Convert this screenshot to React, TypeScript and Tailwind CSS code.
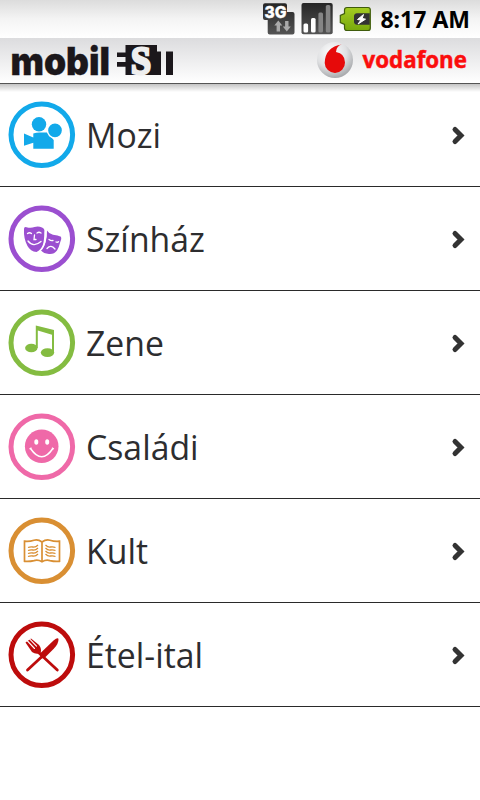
import type { ReactNode } from 'react'

const MovieIcon = () => (
  <g fill="#12a9ea">
    <circle cx="32" cy="24.300" r="7.200" />
    <path d="M26.300 33.500q3-1 6-1h8l6.400 7.500v8.700H26.300v-6l-9.300 3V33.500l9.300 4z" />
    <circle cx="48" cy="30.300" r="7.600" stroke="#fff" strokeWidth="1.500" />
  </g>
)

const MasksIcon = () => (
  <g>
    <path fill="#9b4fd0" d="M40 26.500q2 3.500 6 4.300q5 .5 8 2q1 2-.8 5.500q-1.200 5-3.200 8.200q-3 4-8 3.500q-5.500-.5-8-3.500q6-6 6-20z" />
    <path fill="#9b4fd0" d="M17 25q0-2.500 2.500-1.800q4.500 1.300 8-.2q4-1 7.500.5q3 1 2.300 4.500q0 8-1.300 12.500q-2 5.500-6.500 7.500q-6-.5-9-6q-4-7-3.500-17z" />
    <path fill="none" stroke="#fff" strokeWidth="1.300" strokeLinecap="round" d="M20.500 29.500q2-1.500 4 0M30 29q2-1.500 4 0M21 37q5.500 7 13 .5M27.500 31l-.5 4.500h2M42 35.500q2 1.500 4 1M49 38q1.500.6 2.500-.3M40 44.500q4-4.500 8 .5" />
    <path fill="none" stroke="#fff" strokeWidth="1.200" d="M38.800 25q.8 14-4.500 21" />
  </g>
)

const MusicIcon = () => (
  <g fill="#84bc41">
    <ellipse cx="24.300" cy="40" rx="6.200" ry="4.300" />
    <ellipse cx="40.500" cy="44.600" rx="6.700" ry="4.400" />
    <path d="M28.800 17.500l18.200 4.500V45h-2V26.800L30.800 22.500V40h-2z" />
  </g>
)

const SmileyIcon = () => (
  <g>
    <circle cx="34.700" cy="34.300" r="16.800" fill="#ef69a8" />
    <ellipse cx="29.300" cy="30" rx="2" ry="2.800" fill="#fff" />
    <ellipse cx="40.200" cy="30" rx="2" ry="2.800" fill="#fff" />
    <path d="M23.500 36.500q11.200 16.500 22.400 0" fill="none" stroke="#fff" strokeWidth="1.500" />
    <path d="M22.500 37l2-1.200M46.900 37l-2-1.200" stroke="#fff" strokeWidth="1.200" />
  </g>
)

const BookIcon = () => (
  <g fill="none" stroke="#d98f33">
    <path strokeWidth="1.700" d="M35 26q-4-3-8-1.800q-4.500 1.500-9.500 1V45.300q5 .5 9.500-.7q4-1.200 8 1.200q4-2.400 8-1.200q4.500 1.200 9.500.7V25.200q-5 .5-9.500-1q-4-1.200-8 1.800zV45.500" />
    <path strokeWidth="1.300" d="M21 31.500q2.500-1 5-.5t5-2M21 34.500q2.500-1 5-.5t5-2M21 37.500q2.500-1 5-.5t5-2M21 40.500q2.500-1 5-.5t5-2M38.500 29q2.500 2.500 5 2t5 .5M38.500 32q2.500 2.500 5 2t5 .5M38.500 35q2.500 2.500 5 2t5 .5M38.500 38q2.500 2.500 5 2t5 .5" />
  </g>
)

const CutleryIcon = () => (
  <g fill="none" stroke="#bd0c0c" strokeLinecap="round">
    <path strokeWidth="2.800" d="M20.500 50L35 36.500M50.300 50L31 32" />
    <path fill="#bd0c0c" stroke="none" d="M33 33.500L46.500 20.500q4.500-3.800 5-1.500q.2 4.500-4.500 9.500L38 37.500l-4 1z" />
    <path fill="#bd0c0c" stroke="none" d="M18.500 22.500l5.500-4 8 6.500q3 4 1.500 8q-4.500 2-8.500-1z" />
    <path stroke="#fff" strokeWidth="1.100" d="M20 20.500l7.500 8M22.500 18.800l7 7.400" />
  </g>
)

const categories: { name: string; color: string; icon: ReactNode }[] = [
  { name: 'Mozi', color: '#12a9ea', icon: <MovieIcon /> },
  { name: 'Színház', color: '#9b4fd0', icon: <MasksIcon /> },
  { name: 'Zene', color: '#84bc41', icon: <MusicIcon /> },
  { name: 'Családi', color: '#ef69a8', icon: <SmileyIcon /> },
  { name: 'Kult', color: '#d98f33', icon: <BookIcon /> },
  { name: 'Étel-ital', color: '#bd0c0c', icon: <CutleryIcon /> },
]

const StatusIcons = () => (
  <svg width="116" height="38" viewBox="0 0 116 38">
    <defs>
      <linearGradient id="dark" x2="0" y2="1">
        <stop stopColor="#252525" />
        <stop offset="1" stopColor="#555" />
      </linearGradient>
      <linearGradient id="green" x2="0" y2="1">
        <stop stopColor="#a4cc22" />
        <stop offset="1" stopColor="#78a80c" />
      </linearGradient>
    </defs>

    {/* 3G */}
    <path d="M6 3.300h20q2 0 2 2V12h5.500q2 0 2 2v18.500q0 2-2 2H10.700q-2 0-2-2V20H6q-2 0-2-2V5.300q0-2 2-2z" fill="url(#dark)" />
    <text x="5.500" y="17.500" fontSize="16.500" fontWeight="800" textLength="22" lengthAdjust="spacingAndGlyphs" fill="#fff" stroke="#fff" strokeWidth="0.400" className="font-['Inter','Liberation_Sans',sans-serif]">3G</text>
    <path d="M19.300 20.500l4 5h-2.300v6h-3.400v-6h-2.300zM27.800 31.500l-4-5h2.300v-5.500h3.400v5.500h2.300z" fill="#aaa" />

    {/* signal */}
    <rect x="42.500" y="3" width="31.200" height="31.300" rx="2" fill="url(#dark)" />
    <rect x="44.500" y="23.500" width="4.600" height="9" rx="1.500" fill="#fff" />
    <rect x="52" y="18" width="4.600" height="14.500" rx="1.500" fill="#fff" />
    <rect x="59.400" y="12.500" width="4.600" height="20" rx="1.500" fill="#858585" />
    <rect x="66.800" y="5" width="4.600" height="27.500" rx="1.500" fill="#858585" />

    {/* battery */}
    <path d="M88 7.500h21q2.300 0 2.300 2.300v18.400q0 2.300-2.300 2.300H88q-2.500 0-2.500-2.500v-3.500l-4.200-2v-7l4.200-2V10q0-2.500 2.500-2.500z" fill="url(#green)" stroke="#3f5c0c" strokeWidth="1.200" />
    <path d="M98 13.300h12.700v11.400H98q-3-.4-3-3v-5.400q0-2.600 3-3z" fill="#333" />
    <path d="M104.500 14.500l-6 5 3.500.6-3 3.900 7.500-4.800-3.300-.8z" fill="#fff" stroke="#fff" strokeWidth="1" />
  </svg>
)

const StatusBar = () => (
  <div className="flex h-[38px] items-center justify-end bg-linear-to-b from-[#dcdcdc] via-[#f4f4f4] to-white pr-[10px]">
    <StatusIcons />
    <span className="ml-[5px] text-[23px] font-bold text-black">8:17 AM</span>
  </div>
)

const MobilEstLogo = () => (
  <svg className="overflow-visible" width="166" height="45" viewBox="0 0 166 45">
    <text x="0.500" y="36.500" fontSize="38" fontWeight="900" textLength="99.500" lengthAdjust="spacingAndGlyphs" fill="#1b171b" stroke="#1b171b" strokeWidth="0.300" className="font-['Inter','Lato',sans-serif]">mobil</text>
    <path d="M107 14.500h8.500V7H147v6.500h4V37h-35.500v-8.200H107v-4.800h8.500v-5H107z" fill="#1b171b" />
    <rect x="156" y="13.500" width="7" height="23.500" fill="#1b171b" />
    <text x="121" y="35.500" fontSize="40" fontWeight="700" textLength="20" lengthAdjust="spacingAndGlyphs" fill="#eee" stroke="#eee" strokeWidth="2.800" className="font-['Liberation_Serif',serif]">S</text>
  </svg>
)

const VodafoneLogo = () => (
  <svg className="overflow-visible" width="156" height="45" viewBox="0 0 156 45">
    <defs>
      <radialGradient id="ball" cx="0.4" cy="0.3" r="0.7">
        <stop stopColor="#fff" />
        <stop offset="0.600" stopColor="#dfe0e2" />
        <stop offset="1" stopColor="#a9abae" />
      </radialGradient>
    </defs>
    <circle cx="19" cy="22" r="18" fill="url(#ball)" />
    <path d="M26 6.500q-5.500 1-6 7.500q9 1.500 9 10.500a10 10 0 0 1-20.300.500Q9 9 26 6.500z" fill="#e60a0a" />
    <text x="46.500" y="29.500" fontSize="22.500" fontWeight="700" textLength="104.500" lengthAdjust="spacingAndGlyphs" fill="#fb0d0d" stroke="#fb0d0d" strokeWidth="0.500" className="font-['Open_Sans',sans-serif]">vodafone</text>
  </svg>
)

const Header = () => (
  <div className="flex h-[45px] items-center justify-between bg-linear-to-b from-[#dcdcde] to-white pr-2 pl-[10px]">
    <MobilEstLogo />
    <VodafoneLogo />
  </div>
)

export default function App() {
  return (
    <div className="h-[800px] w-[480px] overflow-hidden bg-white font-['Noto_Sans','Open_Sans',sans-serif]">
      <StatusBar />
      <Header />
      <ul className="bg-[linear-gradient(#555_0px,#555_1px,#c4c4c4_1px,#fff_9px)]">
        {categories.map((item) => (
          <li key={item.name} className="flex h-[104px] items-center border-b border-[#2a2a2a] pt-px pr-[14px] pl-[7px]">
            <svg width="70" height="70" viewBox="0 0 70 70">
              <circle cx="34.800" cy="34.700" r="30.800" fill="white" stroke={item.color} strokeWidth="5" />
              {item.icon}
            </svg>
            <span className="ml-[9px] flex-1 origin-left scale-x-[0.965] pb-px font-['Open_Sans','Noto_Sans',sans-serif] text-[35px] leading-none text-[#2d2d2f]">{item.name}</span>
            <svg width="18" height="24" viewBox="0 0 18 24">
              <path d="M7 6.500l6 6-6 6" fill="none" stroke="#333" strokeWidth="5" strokeLinecap="round" />
            </svg>
          </li>
        ))}
      </ul>
    </div>
  )
}
